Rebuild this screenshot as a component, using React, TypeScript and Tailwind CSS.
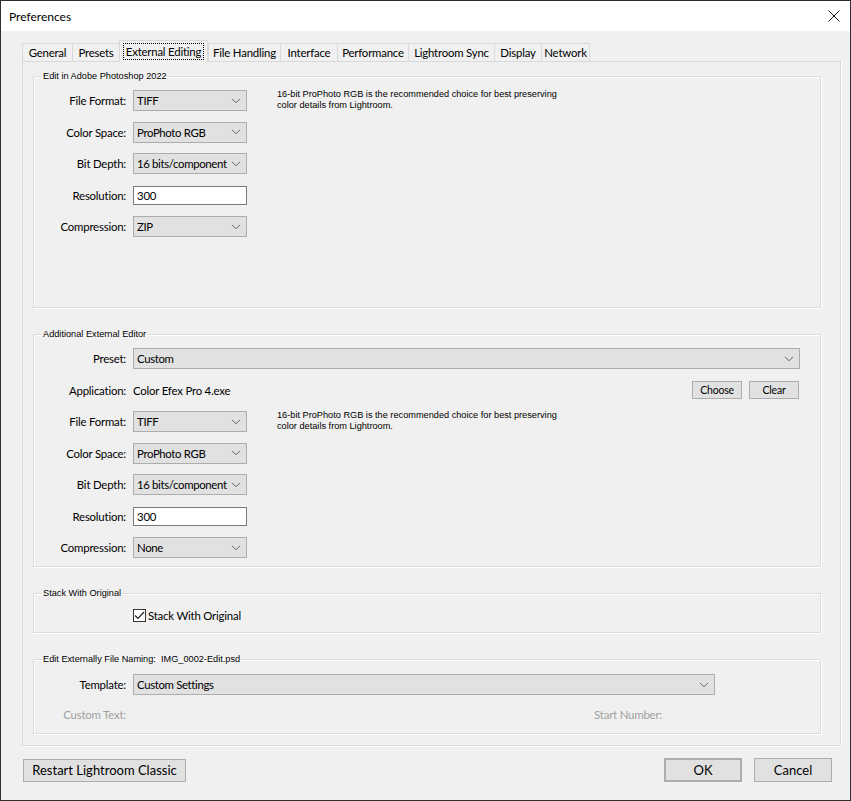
import React from "react";

const tabs = [
  { name: "General", w: "w-[50px]" },
  { name: "Presets", w: "w-[47px]" },
  { name: "External Editing", w: "w-[89px]", active: true },
  { name: "File Handling", w: "w-[72px]" },
  { name: "Interface", w: "w-[57px]" },
  { name: "Performance", w: "w-[71px]" },
  { name: "Lightroom Sync", w: "w-[86px]" },
  { name: "Display", w: "w-[47px]" },
  { name: "Network", w: "w-[49px]" },
];

function Chevron() {
  return (
    <svg width="10" height="6" viewBox="0 0 10 6" className="shrink-0">
      <path d="M1 0.8 L5 4.8 L9 0.8" fill="none" stroke="#606060" strokeWidth="1" />
    </svg>
  );
}

function Select({ value, w = "w-[114px]" }: { value: string; w?: string }) {
  return (
    <div
      className={`${w} h-[21px] flex items-center justify-between bg-[#e1e1e1] border border-[#adadad] pl-[3px] pr-[5px] whitespace-nowrap`}
    >
      <span className="tracking-[-0.35px]">{value}</span>
      <Chevron />
    </div>
  );
}

function Row({ label, children }: { label: string; children: React.ReactNode }) {
  return (
    <div className="flex items-center h-[21px]">
      <div className="w-[93px] text-right pr-px whitespace-nowrap">{label}</div>
      <div className="ml-[6px] flex items-center">{children}</div>
    </div>
  );
}

function Group({
  title,
  children,
  className = "",
}: {
  title: React.ReactNode;
  children: React.ReactNode;
  className?: string;
}) {
  return (
    <fieldset
      className={`border border-[#dcdcdc] shadow-[inset_1px_1px_0_#fff,1px_1px_0_#fff] ${className}`}
    >
      <legend className="ml-[8px] px-[1px] text-[9.2px] leading-[12px] tracking-normal font-['Liberation_Sans',Arial,sans-serif]">
        {title}
      </legend>
      {children}
    </fieldset>
  );
}

function Hint() {
  return (
    <p className="ml-[30px] -mt-[1px] text-[9.2px] leading-[11px] tracking-normal font-['Liberation_Sans',Arial,sans-serif]">
      16-bit ProPhoto RGB is the recommended choice for best preserving
      <br />
      color details from Lightroom.
    </p>
  );
}

function FormatFields({ compression }: { compression: string }) {
  return (
    <div className="flex">
      <div className="flex flex-col gap-[10.5px]">
        <Row label="File Format:">
          <Select value="TIFF" />
        </Row>
        <Row label="Color Space:">
          <Select value="ProPhoto RGB" />
        </Row>
        <Row label="Bit Depth:">
          <Select value="16 bits/component" />
        </Row>
        <Row label="Resolution:">
          <div className="w-[114px] h-[19px] bg-white border border-[#7a7a7a] pl-[3px] flex items-center">
            300
          </div>
        </Row>
        <Row label="Compression:">
          <Select value={compression} />
        </Row>
      </div>
      <Hint />
    </div>
  );
}

function Button({ children, className = "" }: { children: React.ReactNode; className?: string }) {
  return (
    <div
      className={`flex items-center justify-center bg-[#e1e1e1] border border-[#adadad] whitespace-nowrap ${className}`}
    >
      {children}
    </div>
  );
}

export default function App() {
  return (
    <div className="w-[851px] h-[801px] border border-[#2e2e2e] bg-[#f0f0f0] flex flex-col text-[11.4px] leading-[15px] tracking-[-0.2px] text-black font-['Segoe_UI',Lato,'Noto_Sans',sans-serif]">
      {/* title bar */}
      <div className="h-[30px] bg-white flex items-center justify-between pl-[8px] pr-[8px] shrink-0">
        <span className="text-[12px] tracking-normal">Preferences</span>
        <svg width="12" height="12" viewBox="0 0 12 12" className="mr-[2px]">
          <path d="M0.5 0.5 L11.5 11.5 M11.5 0.5 L0.5 11.5" stroke="#111" strokeWidth="1" />
        </svg>
      </div>

      <div className="pl-[21px] pr-[9px] pt-[9px] flex flex-col">
        {/* tabs */}
        <div className="flex items-end h-[21px]">
          {tabs.map((t, i) =>
            t.active ? (
              <div
                key={t.name}
                className={`${t.w} h-[22px] -mb-px relative z-10 bg-[#f0f0f0] border border-b-0 border-[#d9d9d9] flex items-start justify-center pt-[2px] whitespace-nowrap`}
              >
                <span className="border border-dotted border-black px-[2px] leading-[15px]">
                  {t.name}
                </span>
              </div>
            ) : (
              <div
                key={t.name}
                className={`${t.w} h-[18px] border-t border-l border-[#d9d9d9] ${
                  i === tabs.length - 1 ? "border-r" : ""
                } flex items-center justify-center whitespace-nowrap`}
              >
                {t.name}
              </div>
            )
          )}
        </div>

        {/* panel */}
        <div className="w-[819px] h-[685px] border border-[#d9d9d9] shadow-[1px_1px_0_#fff] pl-[10px] pr-[19px] pt-[8px] flex flex-col">
          <Group title="Edit in Adobe Photoshop 2022" className="h-[238px] pt-[8px]">
            <FormatFields compression="ZIP" />
          </Group>

          <Group title="Additional External Editor" className="mt-[20px] pt-[8px] pb-[8px]">
            <div className="flex flex-col gap-[10.5px]">
              <Row label="Preset:">
                <Select value="Custom" w="w-[667px]" />
              </Row>
              <div className="flex items-center h-[21px]">
                <div className="w-[93px] text-right pr-px">Application:</div>
                <div className="ml-[6px] flex-1">Color Efex Pro 4.exe</div>
                <div className="flex gap-[7px] mr-[21px]">
                  <Button className="w-[50px] h-[18px] text-[10.5px]">Choose</Button>
                  <Button className="w-[50px] h-[18px] text-[10.5px]">Clear</Button>
                </div>
              </div>
              <FormatFields compression="None" />
            </div>
          </Group>

          <Group title="Stack With Original" className="mt-[20px] pt-[9px] pb-[10px]">
            <div className="flex items-center h-[14px] pl-[99px]">
              <div className="w-[13px] h-[13px] border border-[#333] bg-white flex items-center justify-center">
                <svg width="11" height="9" viewBox="0 0 11 9">
                  <path d="M1 4.5 L4 7.5 L10 1" fill="none" stroke="#222" strokeWidth="1.2" />
                </svg>
              </div>
              <span className="ml-[2px]">Stack With Original</span>
            </div>
          </Group>

          <Group
            title={<>Edit Externally File Naming:&nbsp; IMG_0002-Edit.psd</>}
            className="mt-[20px] pt-[9px] pb-[12px]"
          >
            <Row label="Template:">
              <Select value="Custom Settings" w="w-[582px]" />
            </Row>
            <div className="flex items-center h-[14px] mt-[12px] text-[#a0a0a0]">
              <div className="w-[93px] text-right pr-px">Custom Text:</div>
              <div className="w-[535px] text-right">Start Number:</div>
            </div>
          </Group>
        </div>

        {/* bottom buttons */}
        <div className="flex items-center mt-[12px] pl-px">
          <Button className="w-[163px] h-[23px] text-[13px] tracking-normal">Restart Lightroom Classic</Button>
          <div className="flex-1" />
          <Button className="w-[78px] h-[24px] text-[13px] tracking-normal border-2 border-[#0078d7]">OK</Button>
          <Button className="w-[78px] h-[24px] text-[13px] tracking-normal ml-[12px] mr-[9px]">Cancel</Button>
        </div>
      </div>
    </div>
  );
}
